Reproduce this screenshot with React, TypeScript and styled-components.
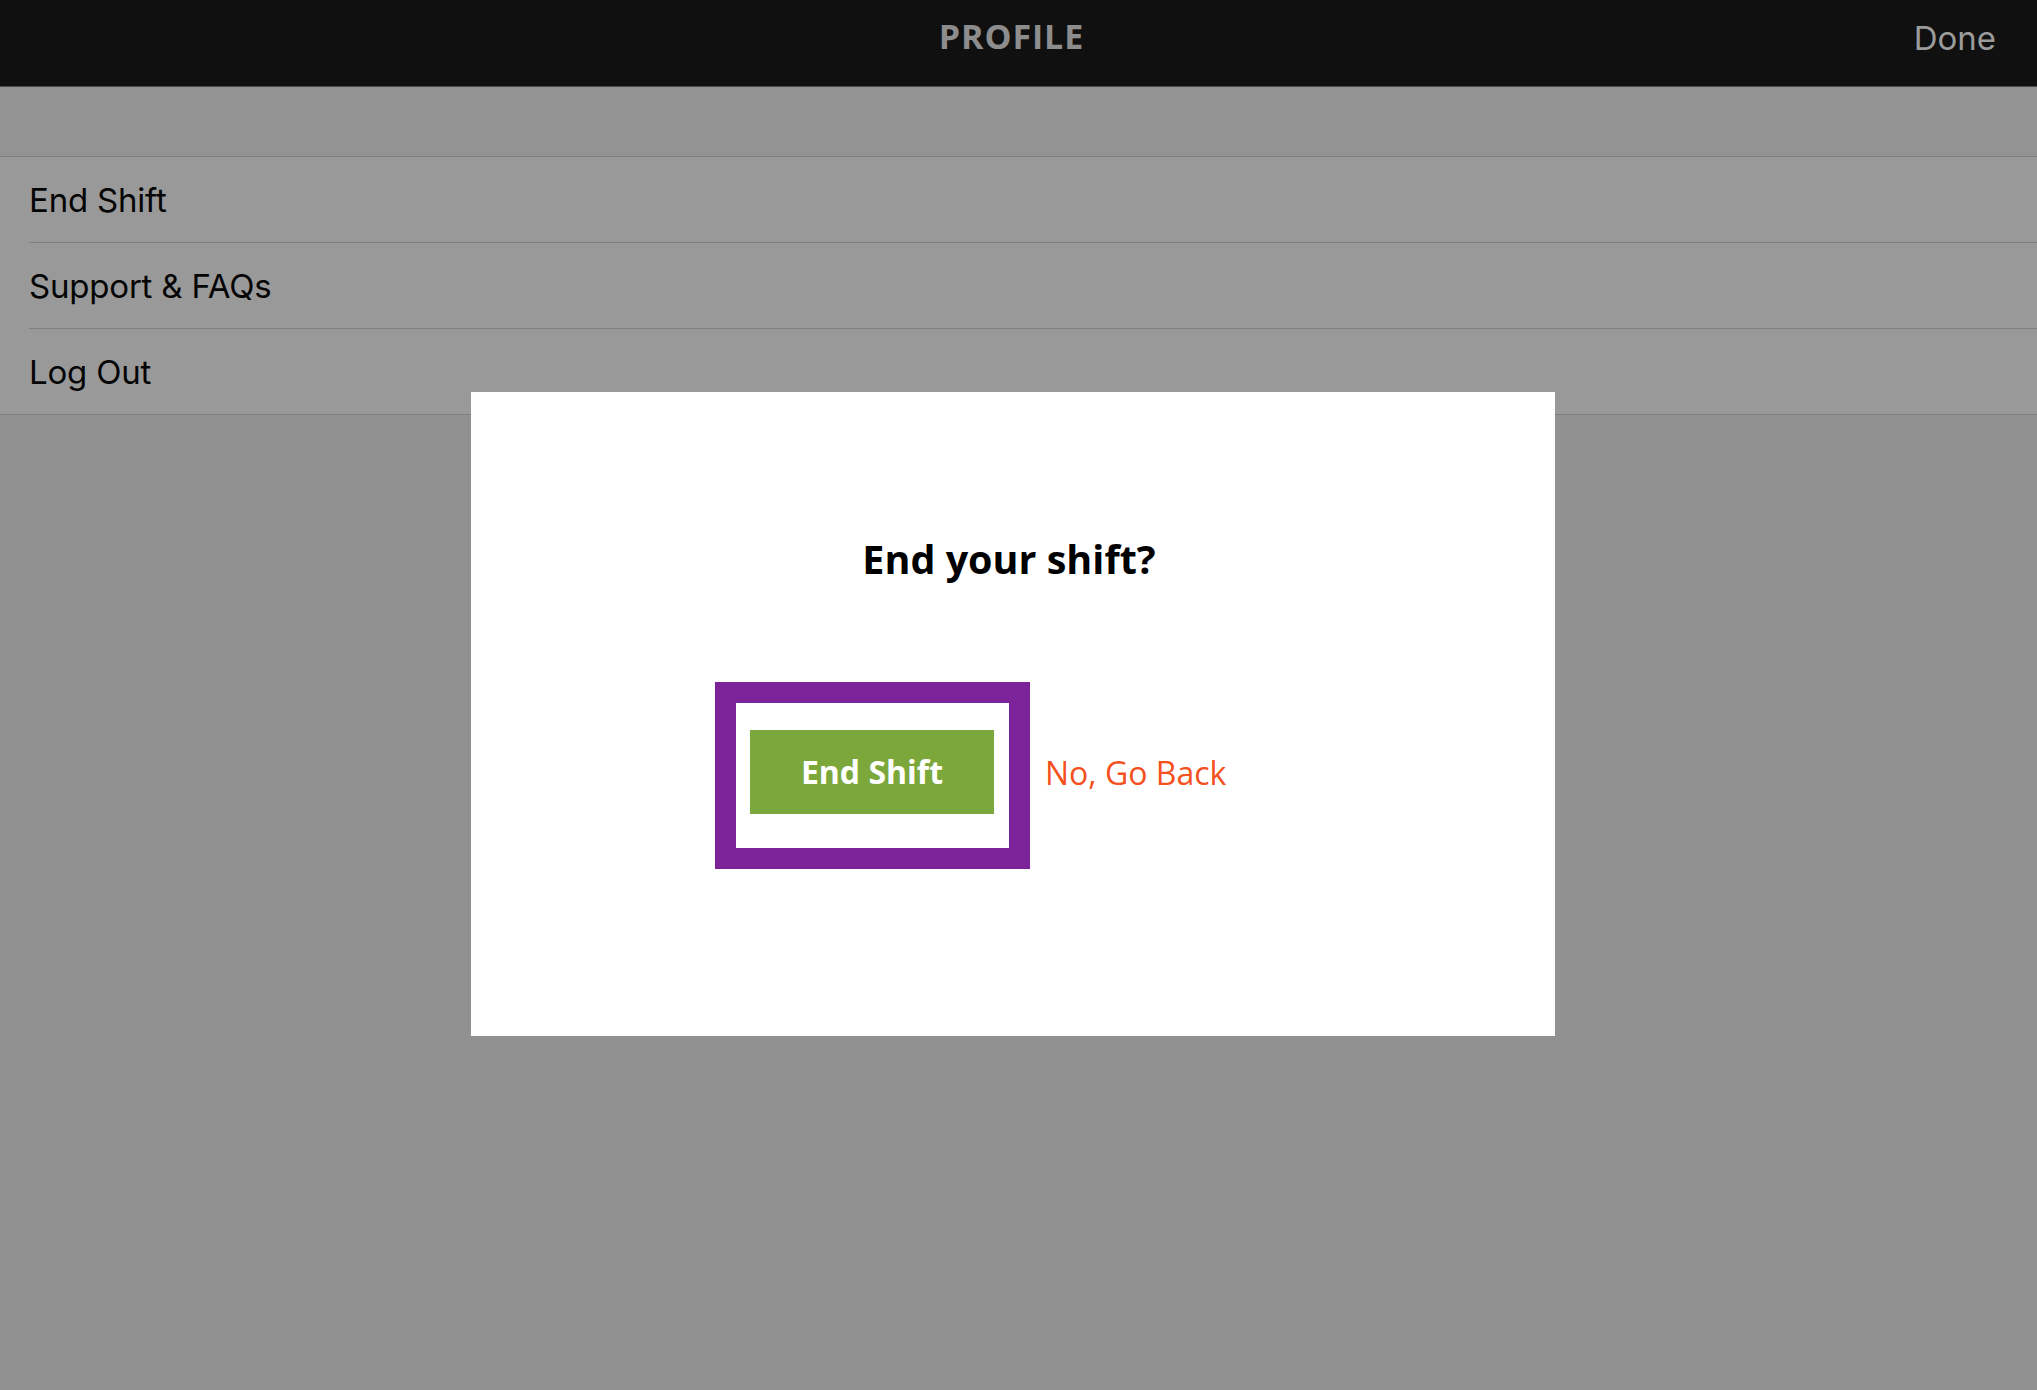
import React from 'react';
import styled, { createGlobalStyle } from 'styled-components';

const GlobalStyle = createGlobalStyle`
  html, body {
    margin: 0;
    padding: 0;
    background: #919191;
  }
  * {
    box-sizing: border-box;
  }
`;

const Page = styled.div`
  min-height: 100vh;
  background: #919191;
  font-family: Inter, "Liberation Sans", sans-serif;
`;

const NavBar = styled.header`
  height: 87px;
  background: #101010;
  border-bottom: 1px solid #4e4e4e;
  display: grid;
  grid-template-columns: 1fr auto 1fr;
  align-items: center;
  padding: 0 41px 14px 41px;
`;

const NavTitle = styled.h1`
  grid-column: 2;
  margin: 0;
  padding-right: 14px;
  font-family: "Open Sans", sans-serif;
  font-weight: 700;
  font-size: 34px;
  letter-spacing: 0.9px;
  color: #8d8d8d;
`;

const DoneButton = styled.button`
  grid-column: 3;
  justify-self: end;
  margin-top: 4px;
  background: none;
  border: none;
  padding: 0;
  font-family: Inter, "Liberation Sans", sans-serif;
  font-size: 33px;
  font-weight: 400;
  color: #9b9b9b;
  cursor: pointer;
`;

const Band = styled.div`
  height: 70px;
  background: #939393;
  border-bottom: 1px solid #7f7f7f;
`;

const MenuList = styled.ul`
  list-style: none;
  margin: 0;
  padding: 0;
  background: #999999;
  border-bottom: 1px solid #7f7f7f;
`;

const MenuRow = styled.li<{ $last?: boolean }>`
  height: ${(p) => (p.$last ? '85px' : '86px')};
  margin-left: 29px;
  display: flex;
  align-items: center;
  border-bottom: ${(p) => (p.$last ? 'none' : '1px solid #7f7f7f')};
  font-size: 33px;
  color: #050505;
  letter-spacing: -0.2px;
`;

const Overlay = styled.div`
  position: fixed;
  inset: 0;
  padding: 392px 0 0 471px;
`;

const Modal = styled.div`
  width: 1084px;
  height: 644px;
  background: #ffffff;
  padding-top: 148px;
  font-family: "Open Sans", sans-serif;
`;

const ModalTitle = styled.h2`
  margin: 0;
  padding-right: 8px;
  font-size: 39.5px;
  line-height: 39px;
  font-weight: 700;
  text-align: center;
  color: #000000;
`;

const Actions = styled.div`
  margin-top: 103px;
  padding-left: 244px;
  display: flex;
  align-items: flex-start;
`;

const Highlight = styled.div`
  width: 315px;
  height: 187px;
  border: 21px solid #7c2399;
  padding: 27px 0 0 14px;
`;

const ConfirmButton = styled.button`
  width: 244px;
  height: 84px;
  border: none;
  background: #7ca83b;
  color: #ffffff;
  font-family: "Open Sans", sans-serif;
  font-size: 32px;
  font-weight: 700;
  display: flex;
  align-items: center;
  justify-content: center;
  padding: 0 0 2px 0;
  cursor: pointer;
`;

const BackLink = styled.button`
  margin: 74px 0 0 15px;
  background: none;
  border: none;
  padding: 0;
  font-family: "Open Sans", sans-serif;
  font-size: 32px;
  line-height: 33px;
  color: #f4511e;
  cursor: pointer;
`;

const items = ['End Shift', 'Support & FAQs', 'Log Out'];

export default function App() {
  return (
    <Page>
      <GlobalStyle />
      <NavBar>
        <NavTitle>PROFILE</NavTitle>
        <DoneButton>Done</DoneButton>
      </NavBar>
      <Band />
      <MenuList>
        {items.map((item, i) => (
          <MenuRow key={item} $last={i === items.length - 1}>
            {item}
          </MenuRow>
        ))}
      </MenuList>
      <Overlay>
        <Modal>
          <ModalTitle>End your shift?</ModalTitle>
          <Actions>
            <Highlight>
              <ConfirmButton>End Shift</ConfirmButton>
            </Highlight>
            <BackLink>No, Go Back</BackLink>
          </Actions>
        </Modal>
      </Overlay>
    </Page>
  );
}
